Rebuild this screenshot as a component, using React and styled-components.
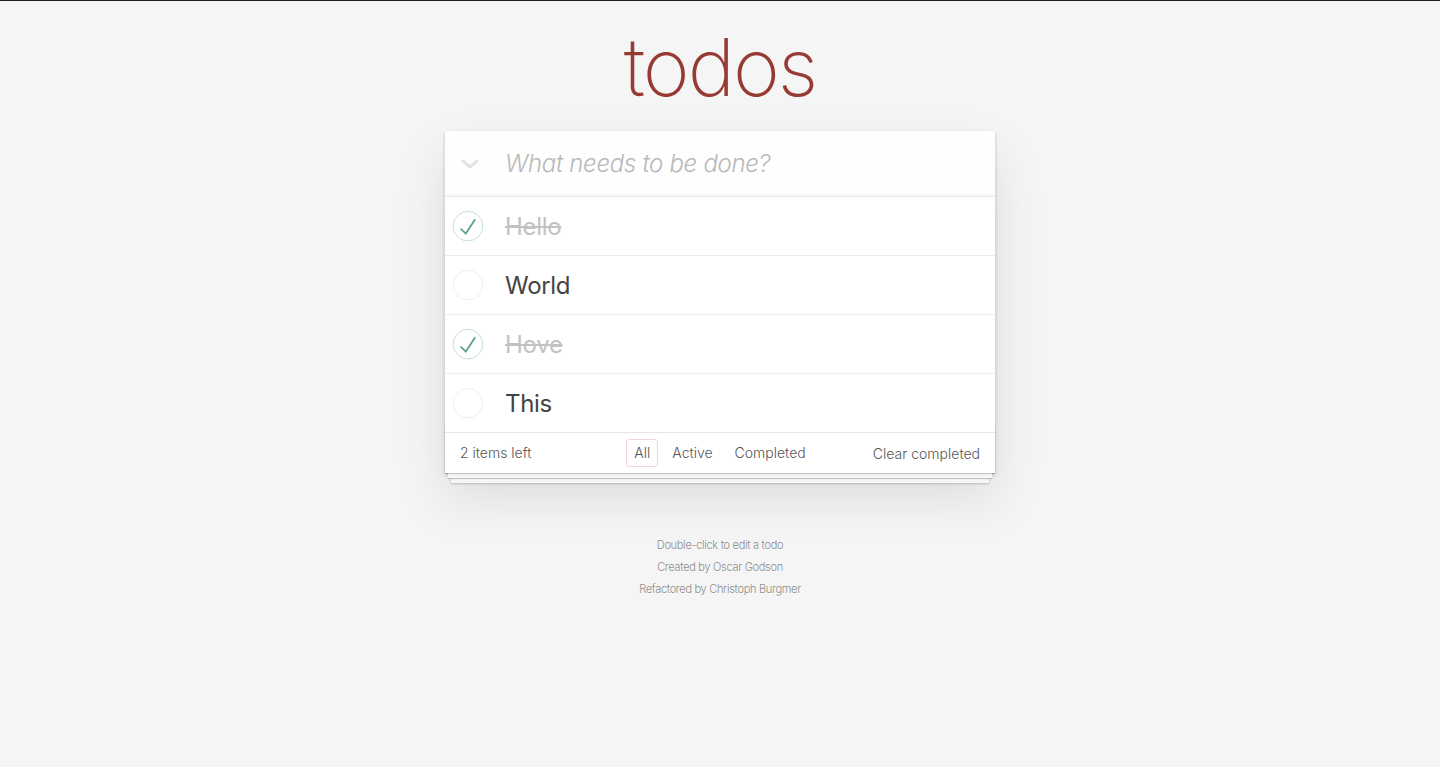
import styled, { createGlobalStyle } from "styled-components";

const GlobalStyle = createGlobalStyle`
  html, body {
    margin: 0;
    padding: 0;
  }
  body {
    background: #f5f5f5;
    font-family: "Inter", "Helvetica Neue", Helvetica, Arial, sans-serif;
    font-size: 14px;
    line-height: 1.4em;
    font-weight: 300;
    color: #4d4d4d;
    min-height: 767px;
    box-sizing: border-box;
    border-top: 1px solid #1b1b1b;
    -webkit-font-smoothing: antialiased;
  }
`;

const Page = styled.div`
  max-width: 550px;
  margin: 0 auto;
`;

const Title = styled.h1`
  margin: 0;
  padding-top: 26px;
  font-size: 80px;
  line-height: 80px;
  font-weight: 200;
  text-align: center;
  color: #973a33;
  letter-spacing: -2px;
`;

const Card = styled.section`
  margin-top: 24px;
  background: #fff;
  position: relative;
  box-shadow: 0 2px 4px 0 rgba(0, 0, 0, 0.2), 0 25px 50px 0 rgba(0, 0, 0, 0.1);
`;

const Header = styled.header`
  display: flex;
  align-items: center;
  height: 65px;
  box-sizing: border-box;
  background: rgba(0, 0, 0, 0.003);
  box-shadow: inset 0 -2px 1px rgba(0, 0, 0, 0.03);
`;

const ToggleAll = styled.span`
  width: 60px;
  height: 65px;
  display: flex;
  align-items: center;
  justify-content: center;
  padding-right: 10px;
  box-sizing: border-box;
  padding-top: 2px;
`;

const NewTodo = styled.input`
  flex: 1;
  border: none;
  outline: none;
  background: transparent;
  font-family: inherit;
  font-size: 24px;
  font-weight: 300;
  line-height: 1.4em;
  padding: 16px 16px 16px 0;
  color: #4d4d4d;
  letter-spacing: -0.3px;
  &::placeholder {
    font-style: italic;
    font-weight: 300;
    color: #b8b8b8;
  }
`;

const List = styled.ul`
  margin: 0;
  padding: 0;
  list-style: none;
  border-top: 1px solid #e6e6e6;
`;

const Item = styled.li`
  display: flex;
  align-items: center;
  font-size: 24px;
  border-bottom: 1px solid #ededed;
  &:last-child {
    border-bottom: none;
  }
`;

const Check = styled.svg`
  flex: none;
  display: block;
`;

const Label = styled.label`
  flex: 1;
  padding: 16px 15px 14px 20px;
  line-height: 28px;
  font-weight: 400;
  letter-spacing: -0.3px;
  color: ${(p) => (p.$done ? "#c2c2c2" : "#444")};
  text-decoration: ${(p) => (p.$done ? "line-through" : "none")};
`;

const Footer = styled.footer`
  position: relative;
  display: grid;
  grid-template-columns: 1fr auto 1fr;
  grid-template-rows: 20px;
  align-items: center;
  height: 20px;
  padding: 10px 15px;
  border-top: 1px solid #e6e6e6;
  color: #555;
  &::before {
    content: "";
    position: absolute;
    right: 0;
    bottom: 0;
    left: 0;
    height: 50px;
    overflow: hidden;
    pointer-events: none;
    box-shadow: 0 1px 1px rgba(0, 0, 0, 0.2), 0 8px 0 -3px #f6f6f6,
      0 9px 1px -3px rgba(0, 0, 0, 0.2), 0 16px 0 -6px #f6f6f6,
      0 17px 2px -6px rgba(0, 0, 0, 0.2);
  }
`;

const Count = styled.span`
  position: relative;
  justify-self: start;
`;

const Filters = styled.ul`
  position: relative;
  display: flex;
  margin: 0;
  padding: 0;
  list-style: none;
`;

const Filter = styled.a`
  display: block;
  margin: 3px;
  padding: 3px 7px;
  border: 1px solid ${(p) => (p.$selected ? "rgba(175, 47, 47, 0.2)" : "transparent")};
  border-radius: 3px;
  color: inherit;
  text-decoration: none;
  cursor: pointer;
`;

const Clear = styled.button`
  position: relative;
  justify-self: end;
  margin: 2px 0 0;
  padding: 0;
  border: none;
  background: none;
  font: inherit;
  color: inherit;
  line-height: 20px;
  cursor: pointer;
`;

const Info = styled.footer`
  margin: 67px auto 0;
  color: #8c8c8c;
  font-size: 11px;
  letter-spacing: -0.3px;
  text-align: center;
  text-shadow: 0 1px 0 rgba(255, 255, 255, 0.5);
  p {
    line-height: 1;
    margin: 11px 0;
  }
`;

const Chevron = () => (
  <svg width="18" height="11" viewBox="0 0 18 11">
    <polyline
      points="2,2 9,8 16,2"
      fill="none"
      stroke="#e3e3e3"
      strokeWidth="3"
      strokeLinecap="round"
      strokeLinejoin="round"
    />
  </svg>
);

const Toggle = ({ done }) => (
  <Check width="40" height="40" viewBox="-10 -18 100 135">
    <circle
      cx="50"
      cy="50"
      r="50"
      fill="none"
      stroke={done ? "#bddad5" : "#ededed"}
      strokeWidth="3"
    />
    {done && <path fill="#5a9f8d" d="M72 25L42 71 27 56l-4 4 20 20 34-52z" />}
  </Check>
);

const todos = [
  { text: "Hello", done: true },
  { text: "World", done: false },
  { text: "Hove", done: true },
  { text: "This", done: false },
];

export default function App() {
  return (
    <>
      <GlobalStyle />
      <Page>
        <Title>todos</Title>
        <Card>
          <Header>
            <ToggleAll>
              <Chevron />
            </ToggleAll>
            <NewTodo placeholder="What needs to be done?" />
          </Header>
          <List>
            {todos.map((t) => (
              <Item key={t.text}>
                <Toggle done={t.done} />
                <Label $done={t.done}>{t.text}</Label>
              </Item>
            ))}
          </List>
          <Footer>
            <Count>2 items left</Count>
            <Filters>
              <li>
                <Filter $selected>All</Filter>
              </li>
              <li>
                <Filter>Active</Filter>
              </li>
              <li>
                <Filter>Completed</Filter>
              </li>
            </Filters>
            <Clear>Clear completed</Clear>
          </Footer>
        </Card>
        <Info>
          <p>Double-click to edit a todo</p>
          <p>Created by Oscar Godson</p>
          <p>Refactored by Christoph Burgmer</p>
        </Info>
      </Page>
    </>
  );
}
